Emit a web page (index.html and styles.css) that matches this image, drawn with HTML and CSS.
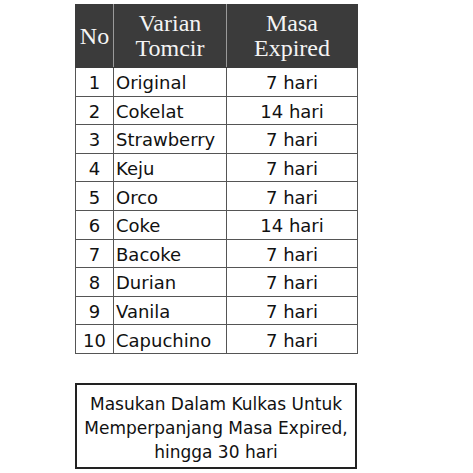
FILE: index.html
```html
<!DOCTYPE html>
<html>
<head>
<meta charset="utf-8">
<link rel="stylesheet" href="styles.css">
</head>
<body>
<div class="page">
  <table class="tbl">
    <colgroup>
      <col class="c-no">
      <col class="c-var">
      <col class="c-exp">
    </colgroup>
    <thead>
      <tr class="head">
        <th>No</th>
        <th>Varian<br>Tomcir</th>
        <th>Masa<br>Expired</th>
      </tr>
    </thead>
    <tbody>
      <tr><td class="no">1</td><td class="name">Original</td><td class="days">7 hari</td></tr>
      <tr><td class="no">2</td><td class="name">Cokelat</td><td class="days">14 hari</td></tr>
      <tr><td class="no">3</td><td class="name">Strawberry</td><td class="days">7 hari</td></tr>
      <tr><td class="no">4</td><td class="name">Keju</td><td class="days">7 hari</td></tr>
      <tr><td class="no">5</td><td class="name">Orco</td><td class="days">7 hari</td></tr>
      <tr><td class="no">6</td><td class="name">Coke</td><td class="days">14 hari</td></tr>
      <tr><td class="no">7</td><td class="name">Bacoke</td><td class="days">7 hari</td></tr>
      <tr><td class="no">8</td><td class="name">Durian</td><td class="days">7 hari</td></tr>
      <tr><td class="no">9</td><td class="name">Vanila</td><td class="days">7 hari</td></tr>
      <tr><td class="no">10</td><td class="name">Capuchino</td><td class="days">7 hari</td></tr>
    </tbody>
  </table>
  <div class="note">Masukan Dalam Kulkas Untuk<br>Memperpanjang Masa Expired,<br>hingga 30 hari</div>
</div>
</body>
</html>
```

FILE: styles.css
```css
html, body {
  margin: 0;
  padding: 0;
  background: #fff;
}
.page {
  padding: 4px 0 0 75px;
  width: 282px;
}
.tbl {
  border-collapse: collapse;
  table-layout: fixed;
  width: 282px;
  font-family: "DejaVu Sans", sans-serif;
  font-size: 18px;
  color: #111;
}
.c-no { width: 38px; }
.c-var { width: 113px; }
.c-exp { width: 131px; }
.head {
  height: 63px;
  background: #3b3b3b;
}
.head th {
  font-family: "Liberation Serif", serif;
  font-weight: normal;
  font-size: 24px;
  line-height: 25px;
  color: #f4f4f4;
  text-align: center;
  padding: 0;
  border: 1px solid #3b3b3b;
  border-left: 1px solid #9a9a9a;
  border-right: 1px solid #9a9a9a;
}
.head th:first-child { border-left-color: #3b3b3b; }
.head th:last-child { border-right-color: #3b3b3b; }
.tbl tbody tr {
  height: 28.6px;
}
.tbl td {
  border: 1px solid #555;
  padding: 3px 0 0;
  line-height: 20px;
  white-space: nowrap;
}
.no { text-align: center; }
.tbl td.name { padding-left: 2px; }
.days { text-align: center; }
.note {
  margin-top: 29px;
  border: 2px solid #222;
  padding: 7px 0 3px;
  text-align: center;
  font-family: "DejaVu Sans", sans-serif;
  font-size: 17px;
  line-height: 24px;
  color: #111;
  box-sizing: border-box;
  width: 282px;
}
```
